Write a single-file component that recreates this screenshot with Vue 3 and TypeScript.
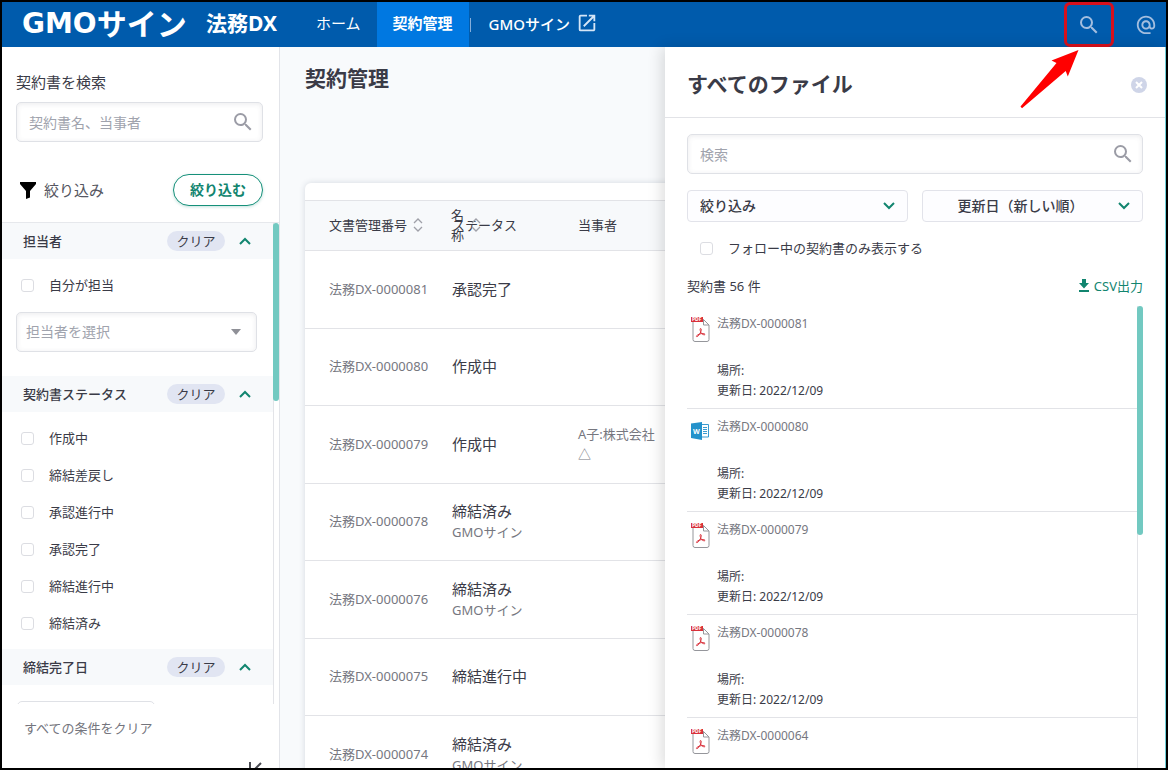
<script setup lang="ts">
import { ref } from 'vue'

interface Contract {
  id: string
  status: string
  via?: string
  party?: string
}

interface FileItem {
  id: string
  kind: 'pdf' | 'word'
  updated: string
}

const contracts: Contract[] = [
  { id: '法務DX-0000081', status: '承認完了' },
  { id: '法務DX-0000080', status: '作成中' },
  { id: '法務DX-0000079', status: '作成中', party: 'A子:株式会社△' },
  { id: '法務DX-0000078', status: '締結済み', via: 'GMOサイン' },
  { id: '法務DX-0000076', status: '締結済み', via: 'GMOサイン' },
  { id: '法務DX-0000075', status: '締結進行中' },
  { id: '法務DX-0000074', status: '締結済み', via: 'GMOサイン' },
]

const files: FileItem[] = [
  { id: '法務DX-0000081', kind: 'pdf', updated: '2022/12/09' },
  { id: '法務DX-0000080', kind: 'word', updated: '2022/12/09' },
  { id: '法務DX-0000079', kind: 'pdf', updated: '2022/12/09' },
  { id: '法務DX-0000078', kind: 'pdf', updated: '2022/12/09' },
  { id: '法務DX-0000064', kind: 'pdf', updated: '2022/12/09' },
]

const statuses = ['作成中', '締結差戻し', '承認進行中', '承認完了', '締結進行中', '締結済み']
const picked = ref<string[]>([])
const mine = ref(false)
const followed = ref(false)

const searchPath =
  'M15.5 14h-.79l-.28-.27A6.47 6.47 0 0 0 16 9.5 6.5 6.5 0 1 0 9.5 16c1.61 0 3.09-.59 4.23-1.57l.27.28v.79l5 4.99L20.49 19l-4.99-5zm-6 0C7.01 14 5 11.99 5 9.5S7.01 5 9.5 5 14 7.01 14 9.5 11.99 14 9.5 14z'
</script>

<template>
  <div class="page">
    <header class="topbar">
      <a href="#" class="brand">
        <span class="brand-gmo">GMO</span><span class="brand-sign">サイン</span>
        <span class="brand-dx">法務DX</span>
      </a>
      <nav class="nav">
        <a href="#" class="tab">ホーム</a>
        <a href="#" class="tab active">契約管理</a>
        <span class="sep"></span>
        <a href="#" class="ext">
          GMOサイン
          <svg viewBox="0 0 24 24" width="22" height="22">
            <path d="M19 19H5V5h7V3H5a2 2 0 0 0-2 2v14a2 2 0 0 0 2 2h14c1.1 0 2-.9 2-2v-7h-2v7zM14 3v2h3.59l-9.83 9.83 1.41 1.41L19 6.41V10h2V3h-7z" />
          </svg>
        </a>
      </nav>
      <div class="tools">
        <button class="tool boxed" aria-label="検索">
          <svg viewBox="0 0 24 24" width="24" height="24"><path :d="searchPath" /></svg>
          <svg class="arrow" viewBox="0 0 60 60" width="60" height="60">
            <path d="M58.5 1 31.5 11.5 36.5 14 .5 57.5 2 59.3 45.7 22 47.8 27.6z" />
          </svg>
        </button>
        <button class="tool" aria-label="メンション">
          <svg viewBox="0 0 24 24" width="22" height="22">
            <path d="M12 1.95c-5.52 0-10 4.48-10 10s4.48 10 10 10h5v-2h-5c-4.34 0-8-3.66-8-8s3.66-8 8-8 8 3.66 8 8v1.43c0 .79-.71 1.57-1.5 1.57s-1.5-.78-1.5-1.57v-1.43c0-2.76-2.24-5-5-5s-5 2.24-5 5 2.24 5 5 5c1.38 0 2.64-.56 3.54-1.47.65.89 1.77 1.47 2.96 1.47 1.97 0 3.5-1.6 3.5-3.57v-1.43c0-5.52-4.48-10-10-10zm0 13c-1.66 0-3-1.34-3-3s1.34-3 3-3 3 1.34 3 3-1.34 3-3 3z" />
          </svg>
        </button>
      </div>
    </header>

    <div class="body">
      <aside class="sidebar">
        <div class="side-top">
          <label for="side-search" class="side-label">契約書を検索</label>
          <div class="field">
            <input id="side-search" type="text" placeholder="契約書名、当事者" />
            <svg viewBox="0 0 24 24" width="24" height="24"><path :d="searchPath" /></svg>
          </div>
          <div class="filter-row">
            <svg viewBox="0 0 16 17" width="16" height="17"><path d="M0 0h16v2L10 9v6.5L6 17V9L0 2z" /></svg>
            <span class="filter-title">絞り込み</span>
            <button class="apply">絞り込む</button>
          </div>
        </div>

        <div class="scroller">
          <div class="groups">
            <section>
              <h2 class="group-head">
                <span>担当者</span>
                <button class="clear">クリア</button>
                <svg viewBox="0 0 12 8" width="12" height="8"><path d="M1 7l5-5 5 5" /></svg>
              </h2>
              <div class="group-body with-select">
                <label class="check"><input v-model="mine" type="checkbox" /><span>自分が担当</span></label>
                <div class="picker">
                  <select aria-label="担当者を選択"><option>担当者を選択</option></select>
                  <svg viewBox="0 0 10 6" width="10" height="6"><path d="M0 0h10L5 6z" /></svg>
                </div>
              </div>
            </section>
            <section>
              <h2 class="group-head">
                <span>契約書ステータス</span>
                <button class="clear">クリア</button>
                <svg viewBox="0 0 12 8" width="12" height="8"><path d="M1 7l5-5 5 5" /></svg>
              </h2>
              <div class="group-body">
                <label v-for="s in statuses" :key="s" class="check">
                  <input v-model="picked" type="checkbox" :value="s" /><span>{{ s }}</span>
                </label>
              </div>
            </section>
            <section>
              <h2 class="group-head">
                <span>締結完了日</span>
                <button class="clear">クリア</button>
                <svg viewBox="0 0 12 8" width="12" height="8"><path d="M1 7l5-5 5 5" /></svg>
              </h2>
              <div class="group-body date"><input type="text" aria-label="締結完了日" /></div>
            </section>
          </div>
          <div class="track"><div class="thumb"></div></div>
        </div>

        <div class="side-foot">
          <button class="clear-all">すべての条件をクリア</button>
          <button class="collapse" aria-label="閉じる">
            <svg viewBox="0 0 14 14" width="14" height="14"><path d="M2 0v14M13 1 7 7l6 6" /></svg>
          </button>
        </div>
      </aside>

      <main class="main">
        <h1>契約管理</h1>
        <div class="card">
          <table>
            <colgroup><col class="c-id" /><col class="c-status" /><col class="c-party" /><col /></colgroup>
            <thead>
              <tr>
                <th>
                  <span class="sortable">
                    文書管理番号
                    <svg viewBox="0 0 10 14" width="10" height="14"><path d="M1 5l4-4 4 4M1 9l4 4 4-4" /></svg>
                  </span>
                </th>
                <th class="status-head">
                  ステータス
                  <span class="name-head">
                    <span class="name-text">名称</span>
                    <svg viewBox="0 0 10 14" width="10" height="14"><path d="M1 5l4-4 4 4M1 9l4 4 4-4" /></svg>
                  </span>
                </th>
                <th>当事者</th>
                <th></th>
              </tr>
            </thead>
            <tbody>
              <tr v-for="c in contracts" :key="c.id">
                <td class="id">{{ c.id }}</td>
                <td>
                  <div class="status">{{ c.status }}</div>
                  <div v-if="c.via" class="via">{{ c.via }}</div>
                </td>
                <td class="party">{{ c.party }}</td>
                <td></td>
              </tr>
            </tbody>
          </table>
        </div>
      </main>

      <section class="drawer">
        <div class="drawer-head">
          <h2>すべてのファイル</h2>
          <button class="close" aria-label="閉じる">
            <svg viewBox="0 0 16 16" width="16" height="16">
              <circle cx="8" cy="8" r="8" /><path d="M5 5l6 6M11 5l-6 6" />
            </svg>
          </button>
        </div>
        <div class="drawer-body">
          <div class="field">
            <input type="text" placeholder="検索" aria-label="検索" />
            <svg viewBox="0 0 24 24" width="24" height="24"><path :d="searchPath" /></svg>
          </div>
          <div class="selects">
            <div class="drop">
              <select aria-label="絞り込み"><option>絞り込み</option></select>
              <svg viewBox="0 0 12 8" width="12" height="8"><path d="M1 1l5 5 5-5" /></svg>
            </div>
            <div class="drop centered">
              <select aria-label="並び順"><option>更新日（新しい順）</option></select>
              <svg viewBox="0 0 12 8" width="12" height="8"><path d="M1 1l5 5 5-5" /></svg>
            </div>
          </div>
          <label class="check follow"><input v-model="followed" type="checkbox" /><span>フォロー中の契約書のみ表示する</span></label>
          <div class="count-row">
            <span>契約書 56 件</span>
            <a href="#" class="csv">
              <svg viewBox="0 0 10 13" width="10" height="13"><path d="M3 0h4v4h3L5 9.500 0 4h3zM0 11h10v2H0z" /></svg>
              CSV出力
            </a>
          </div>
          <div class="file-scroll">
            <ul class="files">
              <li v-for="f in files" :key="f.id">
                <svg v-if="f.kind === 'pdf'" class="ficon" viewBox="0 0 19 26" width="19" height="26">
                  <path class="paper" d="M2 4v18.500a2 2 0 0 0 2 2h12a2 2 0 0 0 2-2V8l-5.500-5.500H4zM12.500 2.500V8H18" />
                  <rect class="red" x="0" y="0" width="12" height="5" />
                  <text x="1" y="4.300" class="pdf-text">PDF</text>
                  <path class="acro" d="M9.500 11.500c1.200 0 .9 2.500-.3 4.600-1.100 2-2.700 4-3.600 3.500-.8-.7 1.500-2.200 3.500-2.700 1.800-.5 4.600-.4 4.900.4.200.9-2 .6-3.300-.7-1.300-1.200-2.100-4.900-1.200-5.100z" />
                </svg>
                <svg v-else class="ficon" viewBox="0 0 19 26" width="19" height="26">
                  <path class="doc" d="M10 4.500h7.500v12.500H10M12 7.500h4M12 9.500h4M12 11.500h4M12 13.500h4" />
                  <path class="blue" d="M0 3.500 11 2v18L0 18z" />
                  <text x="2" y="13.500" class="w-text">W</text>
                </svg>
                <div>
                  <a href="#" class="file-id">{{ f.id }}</a>
                  <p>場所:</p>
                  <p>更新日: {{ f.updated }}</p>
                </div>
              </li>
            </ul>
            <div class="track"><div class="thumb"></div></div>
          </div>
        </div>
      </section>
    </div>
  </div>
</template>

<style>
body {
  margin: 0;
}
</style>

<style scoped>
.page {
  box-sizing: border-box;
  height: 100vh;
  overflow: hidden;
  display: flex;
  flex-direction: column;
  border: 2px solid #000;
  background: #f8fafc;
  color: #3a3b47;
  font-family: "Noto Sans", "Noto Sans CJK JP", sans-serif;
  font-size: 13px;
}
.page * {
  box-sizing: border-box;
}
h1, h2, p, ul {
  margin: 0;
  padding: 0;
}
a {
  color: inherit;
  text-decoration: none;
}
button, input, select {
  font: inherit;
  color: inherit;
}
button {
  border: 0;
  padding: 0;
  background: none;
}
svg {
  flex: none;
  display: block;
}

/* top bar */
.topbar {
  flex: none;
  height: 45px;
  display: flex;
  background: #005bac;
  color: #fff;
}
.brand {
  flex: none;
  width: 298px;
  padding: 0 23px 2px 20px;
  display: flex;
  align-items: center;
  line-height: 1;
}
.brand-gmo {
  font-family: "DejaVu Sans", sans-serif;
  font-size: 28px;
  font-weight: 700;
}
.brand-sign {
  font-size: 30px;
  font-weight: 700;
}
.brand-dx {
  margin-left: auto;
  font-size: 21px;
  font-weight: 700;
}
.nav {
  display: flex;
  font-size: 15px;
}
.tab {
  display: flex;
  align-items: center;
  padding: 0 16px 4px;
}
.tab.active {
  background: #0078e1;
  font-weight: 700;
}
.sep {
  align-self: center;
  width: 1px;
  height: 14px;
  margin-left: 1px;
  background: #85aedb;
}
.ext {
  display: flex;
  align-items: center;
  gap: 6px;
  padding: 0 0 3px 18px;
  font-weight: 500;
}
.ext svg {
  fill: #d5e6f7;
}
.tools {
  margin-left: auto;
  display: flex;
  align-items: center;
  gap: 21px;
  padding-right: 9px;
}
.tool svg {
  fill: #a3bedf;
}
.tool.boxed {
  position: relative;
  width: 50px;
  height: 45px;
  display: flex;
  align-items: center;
  justify-content: center;
  border: 3px solid #d8101c;
  border-radius: 6px;
}
.tool .arrow {
  position: absolute;
  z-index: 5;
  top: 44px;
  right: 31px;
  fill: #f00;
}

.body {
  position: relative;
  flex: 1;
  min-height: 0;
  display: flex;
}

/* shared controls */
.field {
  display: flex;
  align-items: center;
  height: 40px;
  padding: 0 7px 0 12px;
  border: 1px solid #dfe1e6;
  border-radius: 5px;
  background: #fff;
  box-shadow: inset 0 1px 5px rgba(60, 60, 80, 0.1);
}
.field input {
  flex: 1;
  min-width: 0;
  padding: 0;
  border: 0;
  outline: 0;
  background: none;
  font-size: 14px;
}
.field input::placeholder {
  color: #a0a3ad;
}
.field svg {
  fill: #9b9ca6;
}
.check {
  display: flex;
  align-items: center;
  height: 37px;
  gap: 15px;
}
.check span {
  padding-bottom: 2px;
}
.check input {
  appearance: none;
  width: 13px;
  height: 13px;
  margin: 0;
  border: 1px solid #dcdde2;
  border-radius: 3px;
  background: #fff;
}
.track {
  flex: none;
  width: 6px;
  border-left: 1px solid #e3e4e8;
}
.thumb {
  width: 6px;
  margin-left: -1px;
  border-radius: 3px;
  background: #72c9c1;
}

/* sidebar */
.sidebar {
  flex: none;
  width: 278px;
  display: flex;
  flex-direction: column;
  background: #fff;
  border-right: 1px solid #e2e4e9;
}
.side-top {
  padding: 25px 16px 16px 14px;
}
.side-label {
  display: block;
  margin-bottom: 10px;
  font-size: 15px;
  line-height: 20px;
}
.filter-row {
  display: flex;
  align-items: center;
  gap: 8px;
  margin-top: 32px;
  padding-left: 4px;
}
.filter-title {
  flex: 1;
  padding-bottom: 2px;
  font-size: 15px;
  color: #555661;
}
.apply {
  width: 90px;
  height: 32px;
  padding-bottom: 2px;
  border: 1px solid #16907a;
  border-radius: 16px;
  background: #fff;
  color: #12856f;
  font-size: 14px;
  font-weight: 700;
  box-shadow: 0 1px 3px rgba(20, 140, 120, 0.25);
}
.scroller {
  flex: 1;
  min-height: 0;
  display: flex;
  border-top: 1px solid #e6e8ec;
  overflow: hidden;
}
.groups {
  flex: 1;
}
.groups + .track .thumb {
  height: 178px;
}
.group-head {
  display: flex;
  align-items: center;
  height: 36px;
  padding: 0 22px 0 21px;
  background: #f7f9fb;
  font-size: 13px;
  font-weight: 500;
}
.group-head span {
  flex: 1;
  padding-bottom: 2px;
}
.group-head svg,
.drop svg {
  fill: none;
  stroke: #12856f;
  stroke-width: 2;
}
.clear {
  width: 58px;
  height: 20px;
  margin-right: 14px;
  border-radius: 10px;
  background: #e1e5f2;
  line-height: 20px;
  font-weight: 400;
}
.group-body {
  padding: 8px 16px 7px 19px;
}
.group-body.with-select {
  padding-bottom: 24px;
}
.picker {
  display: flex;
  align-items: center;
  height: 40px;
  margin: 8px 0 0 -5px;
  padding-right: 15px;
  border: 1px solid #dfe1e6;
  border-radius: 5px;
  box-shadow: inset 0 1px 5px rgba(60, 60, 80, 0.1);
}
.picker select {
  flex: 1;
  height: 38px;
  appearance: none;
  padding: 0 0 2px 9px;
  border: 0;
  background: none;
  color: #a0a3ad;
  font-size: 14px;
}
.picker svg {
  fill: #8f9097;
}
.group-body.date {
  padding: 16px 16px 16px 15px;
}
.date input {
  display: block;
  width: 138px;
  height: 40px;
  border: 1px solid #dfe1e6;
  border-radius: 5px;
}
.side-foot {
  flex: none;
  position: relative;
  height: 64px;
  padding: 14px 16px 0 22px;
  overflow: hidden;
}
.clear-all {
  line-height: 20px;
  color: #74757d;
}
.collapse {
  position: absolute;
  top: 58px;
  right: 17px;
}
.collapse svg {
  fill: none;
  stroke: #4a4b52;
  stroke-width: 2;
}

/* contract table */
.main {
  flex: 1;
  min-width: 0;
  padding: 16px 0 0 25px;
  overflow: hidden;
}
h1 {
  height: 120px;
  font-size: 21px;
  line-height: 30px;
  font-weight: 700;
}
.card {
  padding-top: 17px;
  border-radius: 6px;
  background: #fff;
  box-shadow: 0 0 6px rgba(40, 50, 80, 0.16);
}
table {
  width: 100%;
  table-layout: fixed;
  border-collapse: separate;
  border-spacing: 0;
}
.c-id {
  width: 123px;
}
.c-status {
  width: 126px;
}
.c-party {
  width: 108px;
}
th, td {
  padding: 0 0 2px 24px;
  border-bottom: 1px solid #e2e3e7;
  text-align: left;
  line-height: 20px;
}
thead th {
  height: 51px;
  border-top: 1px solid #e2e3e7;
  background: #f7f9fb;
  font-weight: 400;
  white-space: nowrap;
}
.sortable {
  display: flex;
  align-items: center;
  gap: 6px;
}
th svg {
  fill: none;
  stroke: #9fa0a8;
  stroke-width: 1.3;
}
.status-head {
  position: relative;
}
.name-head {
  position: absolute;
  top: 4px;
  left: 23px;
  display: flex;
  align-items: center;
  gap: 7px;
}
.name-text {
  width: 13px;
  white-space: normal;
}
tbody tr {
  height: 78px;
}
tbody tr:nth-child(even) {
  height: 77px;
}
.id, .party, .via {
  color: #76777f;
}
.id {
  white-space: nowrap;
}
.status {
  font-size: 15px;
  line-height: 22px;
}

/* file drawer */
.drawer {
  position: absolute;
  top: 0;
  right: 0;
  bottom: 0;
  width: 501px;
  display: flex;
  flex-direction: column;
  background: #fff;
  border-right: 1px solid #6fd0d8;
  box-shadow: -3px 0 14px rgba(0, 0, 0, 0.14);
}
.drawer-head {
  flex: none;
  display: flex;
  align-items: center;
  justify-content: space-between;
  height: 71px;
  padding: 6px 18px 0 22px;
  border-bottom: 1px solid #e2e3e7;
}
.drawer-head h2 {
  padding-bottom: 4px;
  font-size: 21px;
  font-weight: 700;
}
.close circle {
  fill: #cfd5e8;
}
.close path {
  stroke: #fff;
  stroke-width: 2;
}
.drawer-body {
  flex: 1;
  min-height: 0;
  display: flex;
  flex-direction: column;
  padding: 16px 22px 0;
}
.drawer-body .field {
  flex: none;
}
.selects {
  display: grid;
  grid-template-columns: 1fr 1fr;
  gap: 14px;
  margin-top: 16px;
}
.drop {
  display: flex;
  align-items: center;
  height: 32px;
  padding-right: 12px;
  border: 1px solid #e2e3ea;
  border-radius: 4px;
  background: #fdfdff;
}
.drop select {
  flex: 1;
  height: 30px;
  appearance: none;
  padding: 0 0 2px 12px;
  border: 0;
  background: none;
  font-size: 14px;
  font-weight: 500;
}
.centered select {
  padding-left: 0;
  text-align: center;
  text-align-last: center;
}
.follow {
  flex: none;
  height: 26px;
  margin-top: 13px;
  padding-left: 13px;
}
.count-row {
  flex: none;
  display: flex;
  align-items: center;
  justify-content: space-between;
  height: 20px;
  margin: 14px 0 11px;
}
.csv {
  display: flex;
  align-items: center;
  gap: 5px;
  color: #12856f;
}
.csv svg {
  fill: #12856f;
}
.file-scroll {
  flex: 1;
  min-height: 0;
  display: flex;
  overflow: hidden;
}
.files {
  flex: 1;
  list-style: none;
}
.files + .track .thumb {
  height: 229px;
}
.files li {
  display: flex;
  gap: 7px;
  height: 103px;
  padding: 9px 0 0 4px;
  border-bottom: 1px solid #e2e3e7;
  font-size: 12px;
}
.file-id {
  display: block;
  margin-bottom: 28px;
  line-height: 18px;
  color: #76777f;
}
.files p {
  line-height: 20px;
}
.ficon {
  margin-top: 2px;
}
.paper {
  fill: #fff;
  stroke: #95969b;
}
.red {
  fill: #d9303a;
}
.pdf-text {
  fill: #fff;
  font-size: 5px;
  font-weight: 700;
}
.acro {
  fill: none;
  stroke: #d9303a;
}
.doc {
  fill: #fff;
  stroke: #3a9bd0;
}
.blue {
  fill: #2492cb;
}
.w-text {
  fill: #fff;
  font-size: 7px;
  font-weight: 700;
}
</style>
